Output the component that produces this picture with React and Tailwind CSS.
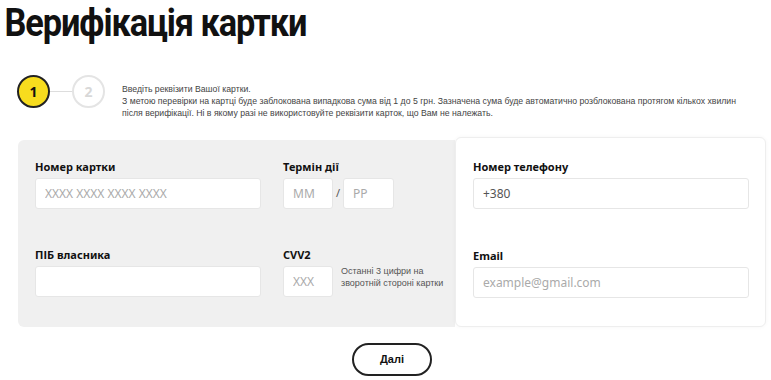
const labelCls = "block text-[11px] leading-[14px] font-bold text-[#111] mb-[4px]";
const inputCls =
  "h-[31px] bg-white border border-[#e6e6e6] rounded-[3px] px-[9px] text-[12px] text-[#333] placeholder-[#aaa] outline-none";

export default function App() {
  return (
    <div className="w-[771px] h-[380px] bg-white overflow-hidden font-['Noto_Sans',sans-serif] text-[#333]">
      <h1 className="pl-[5px] pt-[1px] text-[39px] leading-[44px] font-bold text-[#111] tracking-[-1.2px] font-['Roboto',sans-serif] scale-x-[0.88] origin-left whitespace-nowrap">
        Верифікація картки
      </h1>

      {/* Stepper + info */}
      <div className="flex items-start mt-[30px] pl-[17px]">
        <div className="flex items-center">
          <div className="w-[33px] h-[33px] rounded-full bg-[#f7dc1e] border-2 border-[#222] flex items-center justify-center text-[14px] font-bold text-[#111]">
            1
          </div>
          <div className="w-[22px] h-[1px] bg-[#ddd]" />
          <div className="w-[33px] h-[33px] rounded-full border-2 border-[#e4e4e4] flex items-center justify-center text-[14px] font-bold text-[#d8d8d8]">
            2
          </div>
        </div>
        <div className="ml-[17px] mt-[8px] text-[8.7px] leading-[12px] text-[#444] font-['Liberation_Sans',sans-serif] whitespace-nowrap">
          <p>Введіть реквізити Вашої картки.</p>
          <p>
            З метою перевірки на картці буде заблокована випадкова сума від 1 до 5 грн. Зазначена сума буде автоматично розблокована протягом кількох хвилин
          </p>
          <p>після верифікації. Ні в якому разі не використовуйте реквізити карток, що Вам не належать.</p>
        </div>
      </div>

      {/* Form */}
      <div className="flex mt-[18px] ml-[18px] w-[748px]">
        <div className="w-[437px] h-[187px] mt-[3px] bg-[#f0f0f0] rounded-l-[6px] pl-[17px] pt-[20px]">
          <div className="flex">
            <div className="w-[226px]">
              <label className={labelCls}>Номер картки</label>
              <input className={inputCls + " w-[226px]"} placeholder="XXXX XXXX XXXX XXXX" />
            </div>
            <div className="ml-[22px]">
              <label className={labelCls}>Термін дії</label>
              <div className="flex items-center">
                <input className={inputCls + " w-[50px]"} placeholder="MM" />
                <span className="w-[10px] text-center text-[11px] text-[#555]">/</span>
                <input className={inputCls + " w-[51px]"} placeholder="PP" />
              </div>
            </div>
          </div>
          <div className="flex mt-[39px]">
            <div className="w-[226px]">
              <label className={labelCls}>ПІБ власника</label>
              <input className={inputCls + " w-[226px]"} />
            </div>
            <div className="ml-[22px]">
              <label className={labelCls}>CVV2</label>
              <div className="flex items-start">
                <input className={inputCls + " w-[50px]"} placeholder="XXX" />
                <p className="ml-[8px] mt-[-1px] text-[9px] leading-[12px] text-[#555] font-['Liberation_Sans',sans-serif] whitespace-nowrap">
                  Останні 3 цифри на
                  <br />
                  зворотній стороні картки
                </p>
              </div>
            </div>
          </div>
        </div>
        <div className="w-[311px] h-[190px] bg-white border border-[#eeeeee] rounded-[6px] shadow-[0_0_4px_rgba(0,0,0,0.04)] pl-[17px] pt-[22px]">
          <label className={labelCls}>Номер телефону</label>
          <input className={inputCls + " w-[276px] text-[#555]"} defaultValue="+380" />
          <label className={labelCls + " mt-[40px]"}>Email</label>
          <input className={inputCls + " w-[276px]"} placeholder="example@gmail.com" />
        </div>
      </div>

      <div className="flex justify-center mt-[16px] pl-[13px]">
        <button className="w-[80px] h-[33px] rounded-full border-2 border-[#222] bg-white text-[11px] font-bold text-[#111] font-['Liberation_Sans',sans-serif]">
          Далі
        </button>
      </div>
    </div>
  );
}
